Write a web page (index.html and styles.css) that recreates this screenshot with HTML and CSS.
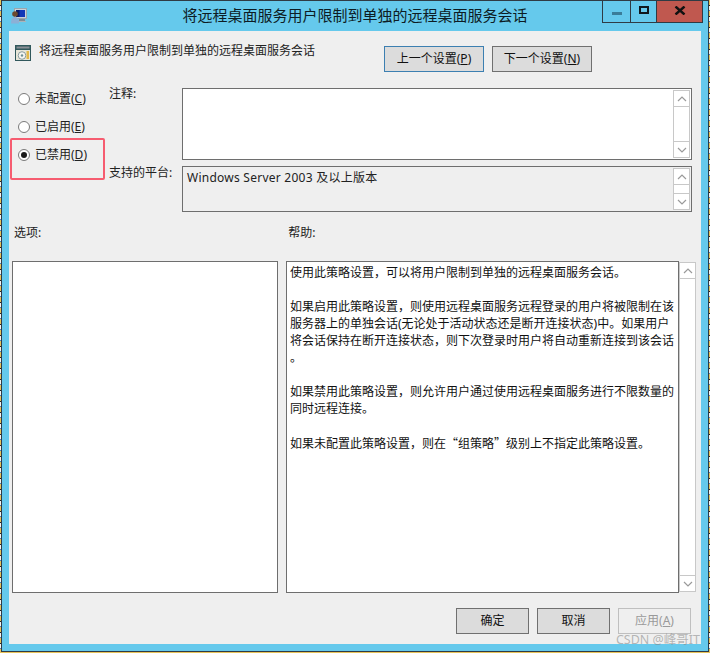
FILE: index.html
```html
<!DOCTYPE html>
<html lang="zh-CN">
<head>
<meta charset="utf-8">
<title>将远程桌面服务用户限制到单独的远程桌面服务会话</title>
<link rel="stylesheet" href="styles.css">
</head>
<body>
<div class="window">
  <header class="titlebar">
    <svg class="app-icon" viewBox="0 0 16 16" width="16" height="16" aria-hidden="true">
      <rect x="3.500" y="0.500" width="12" height="10" fill="#c9d3da" stroke="#9aa6ae"/>
      <rect x="5" y="2" width="9" height="7" fill="#1238b8"/>
      <rect x="5" y="2" width="3.500" height="7" fill="#0a1c66"/>
      <rect x="8" y="11" width="6" height="2" fill="#7f8c96"/>
      <rect x="6" y="13" width="9" height="1" fill="#aab4bb"/>
      <circle cx="4" cy="6" r="2.800" fill="#6b4a2e"/>
      <path d="M0 15.500c0-4 1.500-6.500 4-6.500s3.500 2 4 4v2.500z" fill="#8cb0d6"/>
    </svg>
    <h1 class="title">将远程桌面服务用户限制到单独的远程桌面服务会话</h1>
    <div class="controls">
      <div class="ctl ctl-min"><span class="min-bar"></span></div>
      <div class="ctl ctl-max"><span class="max-box"></span></div>
      <div class="ctl ctl-close">
        <svg viewBox="0 0 12 9" width="12" height="9" aria-hidden="true"><path d="M1.500 0.500l9 8M10.500 0.500l-9 8" stroke="#111" stroke-width="2.400" fill="none"/></svg>
      </div>
    </div>
  </header>

  <main class="client">
    <div class="head-row">
      <svg class="policy-icon" viewBox="0 0 16 16" width="16" height="16" aria-hidden="true">
        <rect x="0" y="0" width="16" height="16" fill="#31585c"/>
        <rect x="1.500" y="1.500" width="13" height="2" fill="#8a8f96"/>
        <rect x="1" y="5" width="14" height="10" fill="#e8e6d8"/>
        <circle cx="7" cy="10.500" r="3.800" fill="#f5f5f0" stroke="#8a9ca0"/>
        <circle cx="7" cy="10.500" r="1.200" fill="#6f8f95"/>
        <rect x="11.500" y="6" width="2.500" height="8" fill="#e2b84a"/>
      </svg>
      <p class="policy-name">将远程桌面服务用户限制到单独的远程桌面服务会话</p>
      <div class="nav-buttons">
        <button class="btn btn-focus" type="button">上一个设置(<u>P</u>)</button>
        <button class="btn" type="button">下一个设置(<u>N</u>)</button>
      </div>
    </div>

    <section class="settings">
      <div class="radios">
        <label class="radio"><span class="dot"></span><span>未配置(<u>C</u>)</span></label>
        <label class="radio"><span class="dot"></span><span>已启用(<u>E</u>)</span></label>
        <label class="radio"><span class="dot dot-on"></span><span>已禁用(<u>D</u>)</span></label>
        <div class="highlight"></div>
      </div>
      <div class="field-label label-note">注释:</div>
      <div class="box box-note">
        <div class="scrollbar">
          <div class="sb-btn"><svg viewBox="0 0 10 6" width="10" height="6" aria-hidden="true"><path d="M1 5l4-4 4 4" class="chev"/></svg></div>
          <div class="sb-track"></div>
          <div class="sb-btn"><svg viewBox="0 0 10 6" width="10" height="6" aria-hidden="true"><path d="M1 1l4 4 4-4" class="chev"/></svg></div>
        </div>
      </div>
      <div class="field-label label-platform">支持的平台:</div>
      <div class="box box-platform">
        <span class="platform-text">Windows Server 2003 及以上版本</span>
        <div class="scrollbar">
          <div class="sb-btn"><svg viewBox="0 0 10 6" width="10" height="6" aria-hidden="true"><path d="M1 5l4-4 4 4" class="chev"/></svg></div>
          <div class="sb-track"></div>
          <div class="sb-btn"><svg viewBox="0 0 10 6" width="10" height="6" aria-hidden="true"><path d="M1 1l4 4 4-4" class="chev"/></svg></div>
        </div>
      </div>
    </section>

    <div class="section-labels">
      <span class="label-options">选项:</span>
      <span class="label-help">帮助:</span>
    </div>

    <section class="panes">
      <div class="pane-options"></div>
      <div class="pane-help">
        <div class="help-text">使用此策略设置，可以将用户限制到单独的远程桌面服务会话。<br><br>如果启用此策略设置，则使用远程桌面服务远程登录的用户将被限制在该<br>服务器上的单独会话(无论处于活动状态还是断开连接状态)中。如果用户<br>将会话保持在断开连接状态，则下次登录时用户将自动重新连接到该会话<br>。<br><br>如果禁用此策略设置，则允许用户通过使用远程桌面服务进行不限数量的<br>同时远程连接。<br><br>如果未配置此策略设置，则在<span class="cjk">“组策略”</span>级别上不指定此策略设置。</div>
      </div>
      <div class="scrollbar scrollbar-help">
        <div class="sb-btn"><svg viewBox="0 0 10 6" width="10" height="6" aria-hidden="true"><path d="M1 5l4-4 4 4" class="chev"/></svg></div>
        <div class="sb-track"></div>
        <div class="sb-btn"><svg viewBox="0 0 10 6" width="10" height="6" aria-hidden="true"><path d="M1 1l4 4 4-4" class="chev"/></svg></div>
      </div>
    </section>

    <footer class="actions">
      <button class="btn btn-small" type="button">确定</button>
      <button class="btn btn-small" type="button">取消</button>
      <button class="btn btn-small btn-disabled" type="button">应用(<u>A</u>)</button>
    </footer>
  </main>
  <div class="watermark">CSDN @峰哥IT</div>
</div>
</body>
</html>
```

FILE: styles.css
```css
* { box-sizing: border-box; }
html, body { margin: 0; padding: 0; }
body {
  width: 710px;
  height: 653px;
  overflow: hidden;
  padding-left: 1px;
  background: repeating-linear-gradient(180deg, #e8c35a 0 5px, #20242a 5px 6px, #f4f4f4 6px 10px, #4a86c8 10px 11px);
  font-family: "Noto Sans", "Noto Sans CJK SC", sans-serif;
  font-size: 12px;
  color: #111;
}
.window {
  position: relative;
  width: 708px;
  height: 652px;
  border: 1px solid #2f3b44;
  background: #65c9ec;
  display: flex;
  flex-direction: column;
}
.titlebar {
  height: 30px;
  flex: none;
  display: flex;
  align-items: flex-start;
  position: relative;
  padding-left: 9px;
}
.app-icon { margin-top: 7px; flex: none; }
.title {
  margin: 4px 0 0;
  position: absolute;
  left: 0;
  right: 0;
  text-align: center;
  font-size: 15px;
  font-weight: 400;
  line-height: 20px;
  color: #0d1c24;
}
.controls {
  position: absolute;
  top: -1px;
  right: 5px;
  display: flex;
  height: 23px;
  border: 1px solid #2f3b44;
}
.ctl { display: flex; align-items: center; justify-content: center; }
.ctl-min { width: 28px; border-right: 1px solid #2f3b44; }
.ctl-max { width: 26px; border-right: 1px solid #2f3b44; }
.ctl-close { width: 45px; background: #c0584f; }
.min-bar { width: 10px; height: 3px; background: #3a7d99; margin-top: 4px; }
.max-box { width: 10px; height: 8px; border: 2px solid #10181d; margin-top: -4px; }
.ctl-close svg { margin-top: -3px; }

.client {
  flex: none;
  width: 692px;
  height: 613px;
  margin-left: 7px;
  background: #efefef;
  padding-top: 11px;
}
.head-row { display: flex; align-items: flex-start; height: 30px; padding-left: 6px; padding-right: 109px; }
.policy-icon { flex: none; margin-top: 3px; }
.policy-name { margin: 0 0 0 8px; line-height: 17px; color: #222; }
.nav-buttons { margin-left: auto; margin-top: 4px; display: flex; gap: 8px; }
.btn {
  width: 100px;
  height: 26px;
  padding: 0;
  border: 1px solid #707070;
  background: #dcdcdc;
  color: #111;
  font: inherit;
  line-height: 24px;
}
.btn-focus { border-color: #3c7fb1; }
.btn-small { width: 73px; }
.btn-disabled { background: #efefef; border-color: #bfbfbf; color: #9a9a9a; }

.settings {
  margin-top: 16px;
  display: grid;
  grid-template-columns: 100px 73px 510px;
  grid-template-rows: 72px 46px;
  row-gap: 6px;
}
.radios {
  grid-row: 1 / span 2;
  position: relative;
  margin-top: -3px;
  padding-left: 9px;
  display: flex;
  flex-direction: column;
}
.radio { height: 28px; flex: none; display: flex; align-items: center; gap: 5px; line-height: 16px; color: #222; }
.dot {
  width: 12px;
  height: 12px;
  border-radius: 50%;
  border: 1px solid #7a7a7a;
  background: #fff;
  flex: none;
  display: flex;
  align-items: center;
  justify-content: center;
}
.dot-on::after { content: ""; width: 6px; height: 6px; border-radius: 50%; background: #1a1a1a; }
.highlight {
  position: absolute;
  left: 1px;
  top: 53px;
  width: 95px;
  height: 42px;
  border: 2px solid #f65c70;
  border-radius: 2px;
}
.field-label { line-height: 16px; color: #222; }
.label-note { margin-top: -2px; }
.label-platform { margin-top: -1px; }
.box {
  border: 1px solid #6e6e6e;
  display: flex;
  padding: 1px;
}
.box-note { background: #fff; }
.box-platform { background: #efefef; }
.platform-text { flex: 1; padding: 2px 0 0 3px; line-height: 16px; letter-spacing: 0.25px; color: #222; }
.box-note .scrollbar { margin-left: auto; }
.scrollbar {
  width: 17px;
  flex: none;
  border: 1px solid #c8c8c8;
  background: #fff;
  display: flex;
  flex-direction: column;
}
.sb-btn {
  height: 16px;
  flex: none;
  display: flex;
  align-items: center;
  justify-content: center;
  background: #fff;
}
.sb-btn:first-child { border-bottom: 1px solid #c8c8c8; }
.sb-btn:last-child { border-top: 1px solid #c8c8c8; }
.sb-track { flex: 1; }
.chev { fill: none; stroke: #9a9a9a; stroke-width: 1.200; }

.section-labels {
  margin-top: 13px;
  height: 16px;
  line-height: 16px;
  display: flex;
  padding-left: 5px;
  color: #222;
}
.label-help { margin-left: 247px; }

.panes {
  margin-top: 20px;
  margin-left: 3px;
  display: flex;
  height: 332px;
}
.pane-options {
  width: 266px;
  border: 1px solid #6e6e6e;
  background: #fff;
  margin-right: 8px;
}
.pane-help {
  width: 393px;
  border: 1px solid #6e6e6e;
  background: #fff;
  padding: 2px 0 0 3px;
}
.help-text { line-height: 17px; white-space: nowrap; color: #111; }
.cjk { font-family: "Noto Sans CJK SC", sans-serif; }
.scrollbar-help { margin: 1px 0; }

.actions {
  margin-top: 15px;
  display: flex;
  justify-content: flex-end;
  gap: 8px;
  padding-right: 10px;
}
.watermark {
  position: absolute;
  right: 8px;
  bottom: 3px;
  font-size: 12.500px;
  line-height: 16px;
  color: rgba(130, 130, 130, 0.55);
  pointer-events: none;
}
```
